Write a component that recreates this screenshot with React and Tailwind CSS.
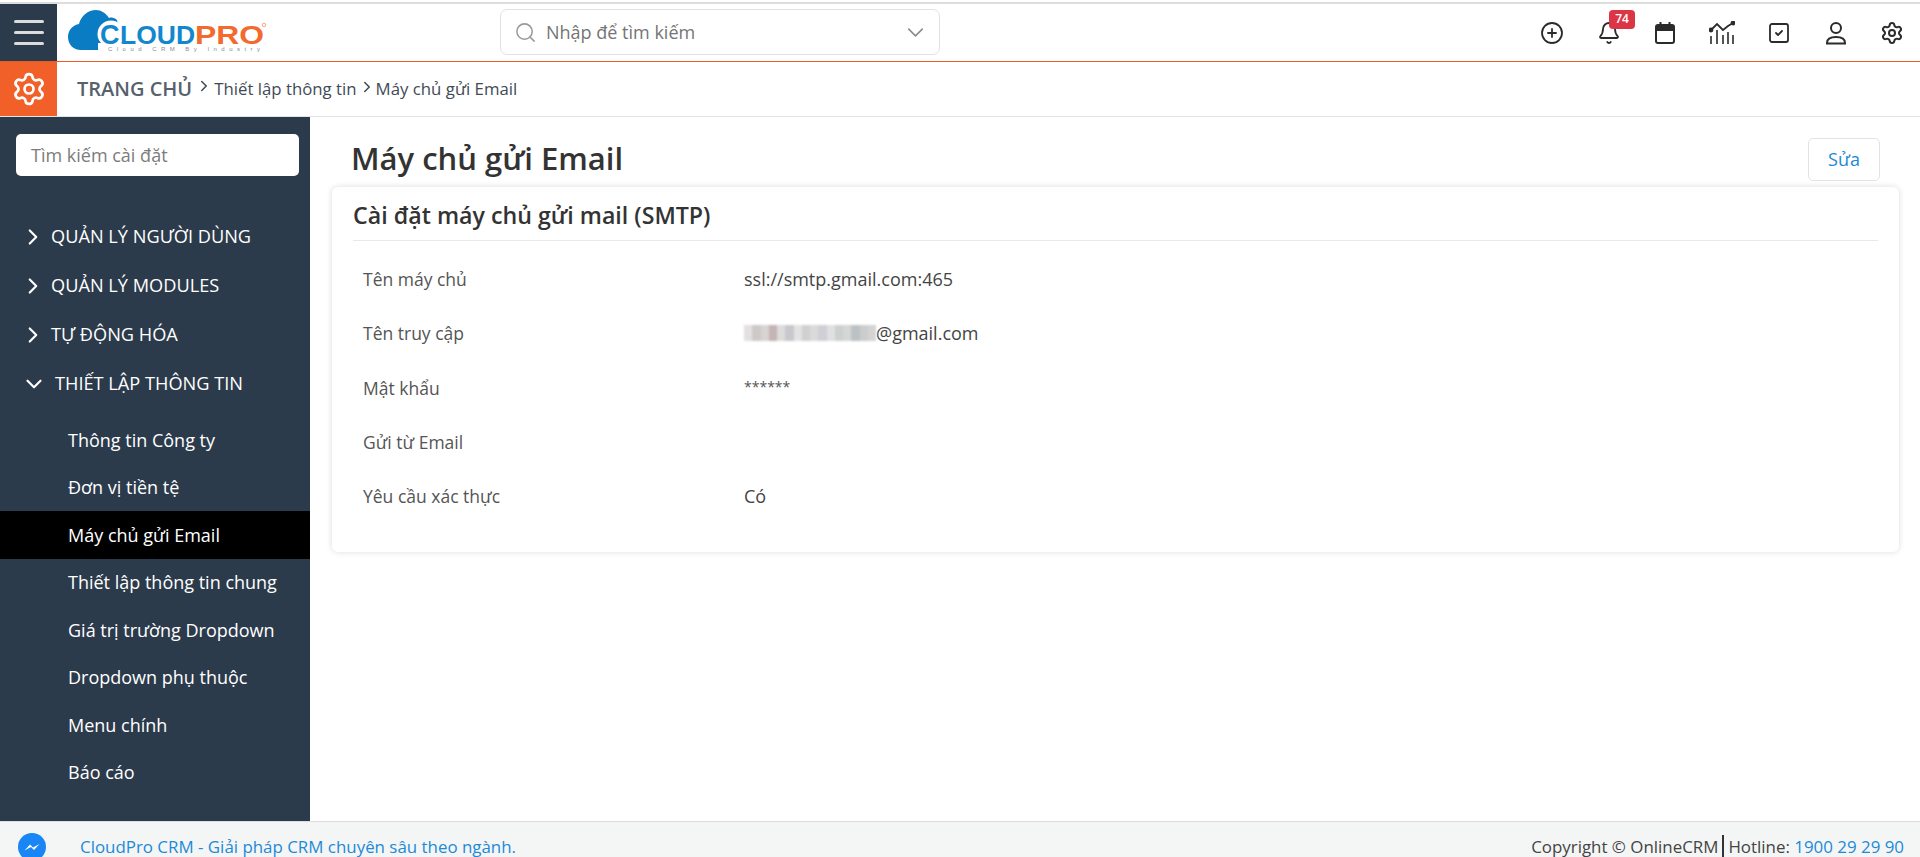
import { Bell, ChevronDown, ChevronRight, CirclePlus, Search, Settings, SquareCheck } from "lucide-react";

const topMenu = ["QUẢN LÝ NGƯỜI DÙNG", "QUẢN LÝ MODULES", "TỰ ĐỘNG HÓA"];
const subMenu = [
  "Thông tin Công ty",
  "Đơn vị tiền tệ",
  "Máy chủ gửi Email",
  "Thiết lập thông tin chung",
  "Giá trị trường Dropdown",
  "Dropdown phụ thuộc",
  "Menu chính",
  "Báo cáo",
];
const rows = [
  ["Tên máy chủ", "ssl://smtp.gmail.com:465"],
  ["Tên truy cập", "@gmail.com"],
  ["Mật khẩu", "******"],
  ["Gửi từ Email", ""],
  ["Yêu cầu xác thực", "Có"],
];
// mảng ô mờ che email
const blurCells = [
  "bg-[#e4e0e0]", "bg-[#cfc8c8]", "bg-[#d8d4d4]", "bg-[#c4b4b4]", "bg-[#dcdcdc]", "bg-[#c8c8cc]", "bg-[#e2e2e2]", "bg-[#d0d0d0]",
  "bg-[#dadada]", "bg-[#cfcfd6]", "bg-[#e0e0e0]", "bg-[#cdd0d0]", "bg-[#d6d6d6]", "bg-[#bcc2c4]", "bg-[#cccccc]", "bg-[#d4d4d4]",
];

function Logo() {
  return (
    <svg width="200" height="46" viewBox="0 0 200 46" className="ml-[11px] shrink-0 overflow-visible">
      <path d="M13 40C5 40 0 34 0 27c0-7 5-12 11-13C13 6 20 0 28 0c5 0 10 3 13 8 3-1 6 0 8 2l6 30z" fill="#0a7cc4" />
      <circle cx="43" cy="24" r="13.5" fill="#fff" />
      <path d="M30 33h26v8H30z" fill="#fff" />
      <text x="32" y="34" fontFamily="'Liberation Sans', sans-serif" fontSize="27" fontWeight="700" fill="#1287ce">C</text>
      <text x="52" y="34" fontFamily="'Liberation Sans', sans-serif" fontSize="25" fontWeight="700" fill="#1287ce" textLength="75" lengthAdjust="spacingAndGlyphs">LOUD</text>
      <text x="127" y="34" fontFamily="'Liberation Sans', sans-serif" fontSize="25" fontWeight="700" fill="#f26a2e" textLength="69" lengthAdjust="spacingAndGlyphs">PRO</text>
      <text x="40" y="41" fontFamily="'Liberation Sans', sans-serif" fontSize="6" fill="#8a8a8a" textLength="152">Cloud CRM By Industry</text>
      <circle cx="196" cy="15" r="1.8" fill="none" stroke="#f26a2e" strokeWidth="0.6" />
    </svg>
  );
}

function CalendarIcon() {
  return (
    <svg width="22" height="24" viewBox="0 0 22 24" fill="none" className="text-[#2b2b2b]">
      <rect x="2" y="4" width="18" height="18" rx="2" stroke="currentColor" strokeWidth="2" />
      <path d="M2 5h18v5H2z" fill="currentColor" />
      <path d="M6.5 1v4M15.5 1v4" stroke="currentColor" strokeWidth="2" />
    </svg>
  );
}

function ChartIcon() {
  return (
    <svg width="26" height="24" viewBox="0 0 26 24" fill="none" stroke="#2b2b2b" strokeWidth="2" className="shrink-0">
      <path d="M2 9 8 3l6 6 5-4 5-3" strokeWidth="1.8" />
      <circle cx="2" cy="9" r="1.4" fill="#2b2b2b" />
      <circle cx="24" cy="2" r="1.4" fill="#2b2b2b" />
      <path d="M2 15v8M8 9v14M14 14v9M19 11v12M24 14v9" strokeWidth="1.6" />
    </svg>
  );
}

function UserIcon() {
  return (
    <svg width="22" height="24" viewBox="0 0 22 24" fill="none" stroke="#2b2b2b" strokeWidth="2">
      <circle cx="11" cy="7" r="5" />
      <path d="M2 22c0-4 3-6 9-6s9 2 9 6v0.5H2z" />
    </svg>
  );
}

function Messenger() {
  return (
    <svg width="28" height="28" viewBox="0 0 28 28" className="shrink-0">
      <circle cx="14" cy="14" r="14" fill="#1a86f5" />
      <path d="M6.5 17.5 12 11.5l3 3 6.5-3.5-5.5 6-3-3z" fill="#fff" />
    </svg>
  );
}

export default function App() {
  return (
    <div className="h-[857px] w-[1920px] overflow-hidden flex flex-col bg-white font-['Open_Sans','Noto_Sans',sans-serif] text-[17.5px] text-[#333]">
      <div className="h-[4px] shrink-0 pt-[2px]"><div className="h-[2px] bg-[#dddddd]" /></div>

      <header className="h-[58px] shrink-0 flex items-center border-b border-[#ea5b25]">
        <div className="w-[57px] h-full bg-[#2c3b4b] flex flex-col items-center justify-center gap-[8px]">
          <span className="w-[30px] h-[3px] rounded-full bg-[#dcdcdc]" />
          <span className="w-[30px] h-[3px] rounded-full bg-[#dcdcdc]" />
          <span className="w-[30px] h-[3px] rounded-full bg-[#dcdcdc]" />
        </div>
        <Logo />
        <div className="ml-[232px] w-[440px] h-[46px] border border-[#e2e2e2] rounded-[7px] flex items-center pl-[13px] pr-[10px] mt-[-1px]">
          <Search size={23} strokeWidth={1.6} className="text-[#9a9a9a]" />
          <span className="ml-[9px] text-[#757575] text-[18px]">Nhập để tìm kiếm</span>
          <ChevronDown size={27} strokeWidth={1.4} className="ml-auto text-[#8a8a8a]" />
        </div>
        <div className="ml-auto flex items-center gap-[33px] pr-[16px] text-[#2b2b2b]">
          <CirclePlus size={24} strokeWidth={1.8} />
          <div className="relative">
            <Bell size={24} strokeWidth={1.8} />
            <span className="absolute left-[12px] top-[-11px] w-[26px] h-[19px] rounded-[4px] bg-[#dc3545] text-white text-[12px] font-semibold flex items-center justify-center">74</span>
          </div>
          <CalendarIcon />
          <ChartIcon />
          <SquareCheck size={24} strokeWidth={1.8} className="mr-[1px] ml-[-1px]" />
          <UserIcon />
          <Settings size={24} strokeWidth={2} />
        </div>
      </header>

      <div className="h-[55px] shrink-0 flex items-center border-b border-[#e3e3e3]">
        <div className="w-[57px] h-full bg-[#f26029] flex items-center justify-center">
          <Settings size={36} strokeWidth={1.8} className="text-white" />
        </div>
        <div className="ml-[20px] flex items-center text-[#3f4a56] text-[16.8px]">
          <span className="text-[20px] font-semibold text-[#56616d]">TRANG CHỦ</span>
          <ChevronRight size={18} className="ml-[3px] mb-[6px]" />
          <span className="ml-[1px]">Thiết lập thông tin</span>
          <ChevronRight size={18} className="ml-[1px] mb-[4px]" />
          <span>Máy chủ gửi Email</span>
        </div>
      </div>

      <div className="flex-1 flex min-h-0">
        <aside className="w-[310px] shrink-0 bg-[#2c3b4b] text-white pt-[17px]">
          <div className="ml-[16px] w-[283px] h-[42px] bg-white rounded-[5px] flex items-center pl-[15px] text-[18px] text-[#7c7c7c]">Tìm kiếm cài đặt</div>
          <nav className="mt-[36px]">
            {topMenu.map((t) => (
              <div key={t} className="h-[49px] flex items-center pl-[24px] text-[18.2px]">
                <ChevronRight size={26} strokeWidth={2} className="ml-[-4px] mr-[4px]" />
                <span className="ml-[1px]">{t}</span>
              </div>
            ))}
            <div className="h-[49px] flex items-center pl-[24px] text-[18.2px]">
              <ChevronDown size={26} strokeWidth={2} className="ml-[-3px]" />
              <span className="ml-[8px]">THIẾT LẬP THÔNG TIN</span>
            </div>
            <div className="mt-[8px]">
              {subMenu.map((s, i) => (
                <div key={s} className={`h-[47.5px] flex items-center pl-[68px] text-[18px] pt-[1px] ${i === 2 ? "bg-black" : ""}`}>{s}</div>
              ))}
            </div>
          </nav>
        </aside>

        <main className="flex-1 min-w-0 pl-[22px] pr-[21px]">
          <div className="h-[70px] flex items-center justify-between pl-[19px] pr-[19px] pt-[14px]">
            <h1 className="text-[31px] font-semibold text-[#333] mt-[-2px]">Máy chủ gửi Email</h1>
            <button className="w-[72px] h-[43px] border border-[#e3e3e3] rounded-[5px] text-[#1c8ad6] text-[18px]">Sửa</button>
          </div>
          <section className="h-[365px] rounded-[6px] bg-white shadow-[0_0_6px_rgba(0,0,0,0.14)] px-[21px]">
            <h2 className="h-[54px] pt-[4px] flex items-center text-[23.2px] font-semibold text-[#333] border-b border-[#e8e8e8]">Cài đặt máy chủ gửi mail (SMTP)</h2>
            <div className="mt-[11px] pl-[10px]">
              {rows.map(([label, value], i) => (
                <div key={label} className="h-[54.3px] flex items-center">
                  <span className="w-[381px] text-[#555]">{label}</span>
                  {i === 1 && (
                    <span className="w-[132px] h-[16px] grid grid-cols-[repeat(16,1fr)] blur-[1px]">
                      {blurCells.map((c, k) => <span key={k} className={c} />)}
                    </span>
                  )}
                  <span className={i === 2 ? "text-[#555] text-[14px] mb-[2px]" : "text-[#444] text-[18px]"}>{value}</span>
                </div>
              ))}
            </div>
          </section>
        </main>
      </div>

      <footer className="h-[36px] shrink-0 bg-[#f4f6f6] border-t border-[#dddddd] flex items-center pl-[18px] pr-[16px] pt-[14px] text-[16.9px]">
        <Messenger />
        <span className="ml-[34px] text-[#1c8ad6]">CloudPro CRM - Giải pháp CRM chuyên sâu theo ngành.</span>
        <span className="ml-auto text-[#444]">Copyright © OnlineCRM<span className="border-l-2 border-[#333] ml-[4px] pl-[4px]">Hotline:</span> <span className="text-[#1c8ad6]">1900 29 29 90</span></span>
      </footer>
    </div>
  );
}
